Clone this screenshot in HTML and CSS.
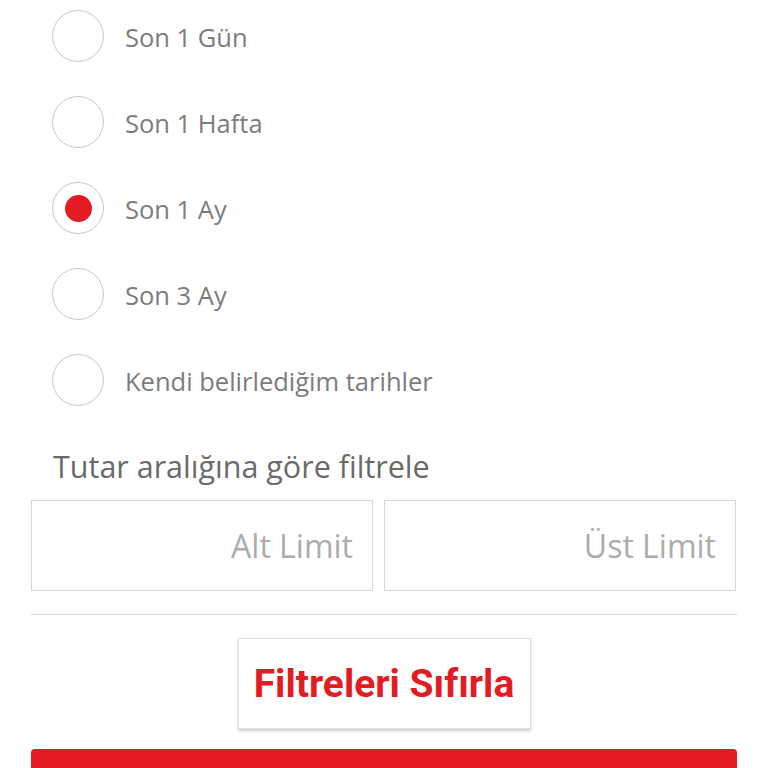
FILE: index.html
```html
<!DOCTYPE html>
<html lang="tr">
<head>
    <meta charset="UTF-8">
    <meta name="viewport" content="width=device-width, initial-scale=1.0">
    <title>Filtreler</title>
    <link rel="stylesheet" href="styles.css">
</head>
<body>
    <div class="filters">
        <div class="date-options">
            <label class="radio-row">
                <span class="radio"></span>
                <span class="radio-label">Son 1 Gün</span>
            </label>
            <label class="radio-row">
                <span class="radio"></span>
                <span class="radio-label">Son 1 Hafta</span>
            </label>
            <label class="radio-row">
                <span class="radio checked"></span>
                <span class="radio-label">Son 1 Ay</span>
            </label>
            <label class="radio-row">
                <span class="radio"></span>
                <span class="radio-label">Son 3 Ay</span>
            </label>
            <label class="radio-row">
                <span class="radio"></span>
                <span class="radio-label">Kendi belirlediğim tarihler</span>
            </label>
        </div>

        <h2 class="section-title">Tutar aralığına göre filtrele</h2>
        <div class="limits">
            <div class="limit-box">Alt Limit</div>
            <div class="limit-box">Üst Limit</div>
        </div>

        <hr class="divider">

        <div class="reset-wrap">
            <button class="reset-btn">Filtreleri Sıfırla</button>
        </div>

        <div class="apply-bar"></div>
    </div>
</body>
</html>
```

FILE: styles.css
```css
html, body {
    margin: 0;
    padding: 0;
    background-color: #fff;
}
body {
    font-family: 'Open Sans', 'Noto Sans', sans-serif;
    color: #7a7a7a;
    overflow: hidden;
    height: 768px;
}
.filters {
    padding: 0 31px;
}
.date-options {
    display: flex;
    flex-direction: column;
    gap: 34px;
    padding: 10px 0 0 21px;
}
.radio-row {
    display: flex;
    align-items: center;
    height: 52px;
}
.radio {
    width: 50px;
    height: 50px;
    border: 1px solid #c8c8c8;
    border-radius: 50%;
    display: flex;
    align-items: center;
    justify-content: center;
    flex-shrink: 0;
}
.radio.checked::after {
    content: "";
    width: 27px;
    height: 27px;
    border-radius: 50%;
    background-color: #e31b23;
}
.radio-label {
    margin-left: 21px;
    font-size: 25.5px;
    color: #7c7c7c;
    position: relative;
    top: 1px;
}
.section-title {
    font-weight: normal;
    font-size: 30.5px;
    line-height: 40px;
    color: #6a6a6a;
    margin: 40px 0 0 22px;
}
.limits {
    display: grid;
    grid-template-columns: 342px 352px;
    gap: 11px;
    margin-top: 14px;
}
.limit-box {
    height: 89px;
    border: 1px solid #d6d6d6;
    display: flex;
    align-items: center;
    justify-content: flex-end;
    padding-right: 19px;
    font-size: 32px;
    color: #acacac;
}
.divider {
    border: none;
    border-top: 1px solid #d9d9d9;
    margin: 23px 0 0 0;
}
.reset-wrap {
    display: flex;
    justify-content: center;
    margin-top: 23px;
}
.reset-btn {
    font-family: Roboto, sans-serif;
    font-weight: bold;
    font-size: 39px;
    color: #e31b23;
    background-color: #fff;
    border: 1px solid #e0e0e0;
    box-shadow: 0 2px 3px rgba(0,0,0,0.2);
    width: 293px;
    height: 91px;
    padding: 0;
    cursor: pointer;
}
.apply-bar {
    margin-top: 20px;
    height: 40px;
    background-color: #e31b23;
    border-radius: 4px 4px 0 0;
}
```
